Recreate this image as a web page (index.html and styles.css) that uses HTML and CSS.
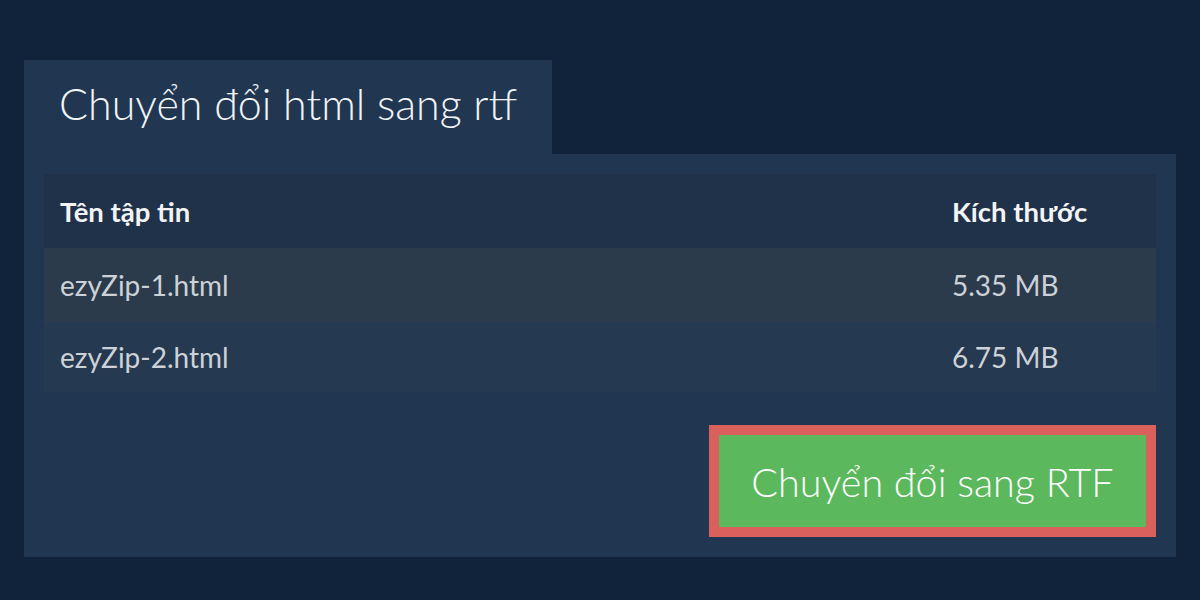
FILE: index.html
```html
<!DOCTYPE html>
<html lang="vi">
<head>
<meta charset="utf-8">
<title>Chuyển đổi html sang rtf</title>
<link rel="stylesheet" href="styles.css">
</head>
<body>
<div class="page">
  <div class="tab"><h1 class="title">Chuyển đổi html sang rtf</h1></div>
  <div class="panel">
    <div class="table">
      <div class="row head">
        <div class="cell name">Tên tập tin</div>
        <div class="cell size">Kích thước</div>
      </div>
      <div class="row odd">
        <div class="cell name">ezyZip-1.html</div>
        <div class="cell size">5.35 MB</div>
      </div>
      <div class="row even last">
        <div class="cell name">ezyZip-2.html</div>
        <div class="cell size">6.75 MB</div>
      </div>
    </div>
    <div class="actions">
      <button class="convert">Chuyển đổi sang RTF</button>
    </div>
  </div>
</div>
</body>
</html>
```

FILE: styles.css
```css
* { box-sizing: border-box; }
html, body {
  margin: 0;
  padding: 0;
  background: #10233a;
  font-family: Lato, "Noto Sans", sans-serif;
}
.page {
  padding: 60px 24px 0 24px;
  display: flex;
  flex-direction: column;
  align-items: flex-start;
}
.tab {
  width: 528px;
  height: 94px;
  background: #213751;
  padding: 0 0 0 35px;
  display: flex;
  align-items: center;
}
.title {
  margin: 0;
  font-weight: 300;
  font-size: 43px;
  color: #f2f4f6;
  line-height: 1;
  position: relative;
  top: -4px;
}
.panel {
  width: 1152px;
  background: #213751;
  padding: 20px 20px 20px 20px;
}
.table {
  display: flex;
  flex-direction: column;
}
.row {
  display: grid;
  grid-template-columns: 892px 1fr;
  align-items: center;
  height: 74px;
}
.row.last { height: 70px; }
.head { background: #1f3249; }
.odd { background: #2b3b4c; }
.even { background: #253950; }
.cell {
  padding: 0 16px;
  font-size: 28px;
  color: #cdd2d8;
}
.head .cell {
  font-weight: 700;
  color: #f3f4f6;
  font-size: 27.5px;
}
.actions {
  display: flex;
  justify-content: flex-end;
  margin-top: 33px;
}
.convert {
  width: 447px;
  height: 112px;
  background: #5cb85c;
  border: 10px solid #da605b;
  color: #ffffff;
  font-family: Lato, "Noto Sans", sans-serif;
  font-weight: 300;
  font-size: 39.5px;
  padding: 0;
  margin: 0;
  cursor: pointer;
}
```
